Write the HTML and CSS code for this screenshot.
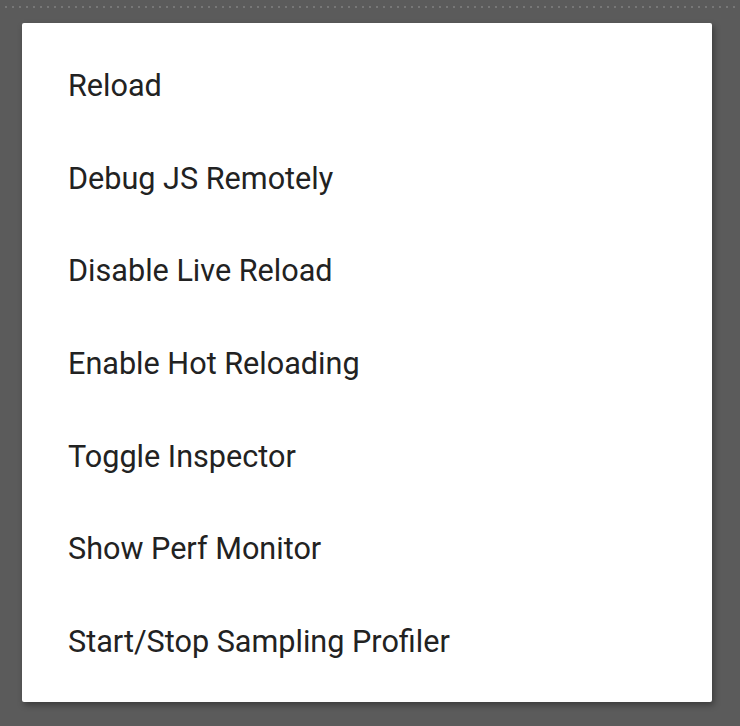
FILE: index.html
```html
<!DOCTYPE html>
<html>
<head>
<meta charset="utf-8">
<link rel="stylesheet" href="styles.css">
</head>
<body>
<div class="screen">
  <div class="dots"></div>
  <div class="dialog">
    <ul class="menu">
      <li class="item">Reload</li>
      <li class="item">Debug JS Remotely</li>
      <li class="item">Disable Live Reload</li>
      <li class="item">Enable Hot Reloading</li>
      <li class="item">Toggle Inspector</li>
      <li class="item">Show Perf Monitor</li>
      <li class="item">Start/Stop Sampling Profiler</li>
    </ul>
  </div>
</div>
</body>
</html>
```
FILE: styles.css
```css
html, body {
  margin: 0;
  padding: 0;
  background: #5b5b5b;
}
.screen {
  position: relative;
  width: 740px;
  height: 726px;
  background: #5b5b5b;
  padding: 23px 28px 0 22px;
  box-sizing: border-box;
}
.dots {
  position: absolute;
  left: 0;
  top: 6px;
  width: 740px;
  height: 2px;
  background: repeating-linear-gradient(to right, transparent 0 5px, #8a8a8a 5px 7px);
  opacity: 0.6;
}
.dialog {
  width: 690px;
  height: 679px;
  background: #ffffff;
  border-radius: 2px;
  box-shadow: 2px 3px 6px rgba(0,0,0,0.35);
  padding: 16px 0 14px;
  box-sizing: border-box;
}
.menu {
  list-style: none;
  margin: 0;
  padding: 0;
}
.item {
  height: 92.7px;
  display: flex;
  align-items: center;
  padding-left: 46px;
  font-family: Roboto, "Noto Sans", sans-serif;
  font-size: 30.6px;
  color: #222222;
}
```
